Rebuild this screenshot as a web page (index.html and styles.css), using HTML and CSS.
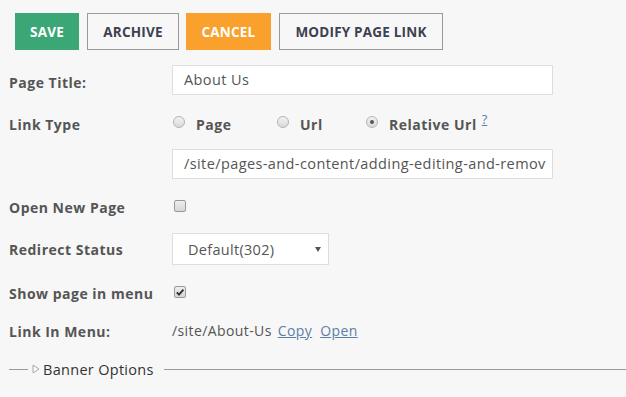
FILE: index.html
```html
<!DOCTYPE html>
<html>
<head>
<meta charset="utf-8">
<link rel="stylesheet" href="styles.css">
</head>
<body>
<div class="page">
  <div class="toolbar">
    <button class="btn btn-save">SAVE</button>
    <button class="btn btn-outline btn-archive">ARCHIVE</button>
    <button class="btn btn-cancel">CANCEL</button>
    <button class="btn btn-outline btn-modify">MODIFY PAGE LINK</button>
  </div>
  <div class="form">
    <div class="row row-title">
      <div class="label">Page Title:</div>
      <div class="field"><div class="input">About Us</div></div>
    </div>
    <div class="row row-linktype">
      <div class="label">Link Type</div>
      <div class="field radios">
        <span class="opt-group g-page"><span class="radio"></span><span class="opt">Page</span></span>
        <span class="opt-group g-url"><span class="radio"></span><span class="opt">Url</span></span>
        <span class="opt-group"><span class="radio checked"></span><span class="opt">Relative Url</span><a class="help">?</a></span>
      </div>
    </div>
    <div class="row row-url">
      <div class="label"></div>
      <div class="field"><div class="input">/site/pages-and-content/adding-editing-and-remov</div></div>
    </div>
    <div class="row row-open">
      <div class="label">Open New Page</div>
      <div class="field"><span class="checkbox"></span></div>
    </div>
    <div class="row row-redirect">
      <div class="label">Redirect Status</div>
      <div class="field"><div class="select"><span>Default(302)</span><span class="caret"></span></div></div>
    </div>
    <div class="row row-show">
      <div class="label">Show page in menu</div>
      <div class="field"><span class="checkbox checked"><svg viewBox="0 0 12 12" width="12" height="12"><path d="M2.8 6.4 L5 8.6 L9.4 3.6" fill="none" stroke="#333" stroke-width="2"/></svg></span></div>
    </div>
    <div class="row row-link">
      <div class="label">Link In Menu:</div>
      <div class="field linkval"><span class="path">/site/About-Us</span><a class="lnk">Copy</a><a class="lnk">Open</a></div>
    </div>
    <div class="banner">
      <span class="rule rule-short"></span>
      <svg class="tri" viewBox="0 0 8 10" width="8" height="10"><path d="M1 1 L7 5 L1 9 Z" fill="none" stroke="#aaa" stroke-width="1"/></svg>
      <span class="banner-text">Banner Options</span>
      <span class="rule rule-long"></span>
    </div>
  </div>
</div>
</body>
</html>
```
FILE: styles.css
```css
html, body {
  margin: 0;
  padding: 0;
  background: #f7f7f7;
}
body {
  font-family: "Open Sans", "DejaVu Sans", sans-serif;
  color: #555;
  width: 626px;
  height: 397px;
  overflow: hidden;
}
.page {
  padding: 13px 0 0 9px;
}
.toolbar {
  display: flex;
  gap: 8px;
  padding-left: 6px;
  height: 37px;
}
.btn {
  font-family: "Open Sans", sans-serif;
  font-weight: 700;
  font-size: 13.5px;
  letter-spacing: 0.2px;
  height: 37px;
  border: 1px solid transparent;
  padding: 0;
  color: #3d4150;
  background: #f7f7f7;
}
.btn-save { width: 64px; background: #3ba776; color: #fff; border-color: #3ba776; }
.btn-archive { width: 92px; margin-right: -1px; }
.btn-cancel { width: 85px; background: #f9a12c; color: #fff; border-color: #f9a12c; }
.btn-modify { width: 164px; }
.btn-outline { border-color: #9a9a9a; }

.form {
  display: flex;
  flex-direction: column;
  margin-top: 15px;
}
.row {
  display: flex;
  align-items: center;
}
.label {
  width: 163px;
  font-weight: 700;
  font-size: 14px;
  letter-spacing: 0.5px;
  color: #555;
  flex-shrink: 0;
}
.field {
  display: flex;
  align-items: center;
}
.input {
  box-sizing: border-box;
  width: 381px;
  height: 30px;
  background: #fff;
  border: 1px solid #dedede;
  padding: 0 11px;
  font-size: 14.5px;
  letter-spacing: 0.4px;
  line-height: 28px;
  color: #555;
  white-space: nowrap;
  overflow: hidden;
}
.row-title { height: 30px; }
.row-title .label { padding-top: 4px; }
.row-linktype { height: 30px; margin-top: 14px; }
.row-url { height: 30px; margin-top: 10px; }
.row-open { height: 30px; margin-top: 13px; }
.row-redirect { height: 32px; margin-top: 11px; }
.row-show { height: 30px; margin-top: 13px; }
.row-link { height: 30px; margin-top: 8px; }

.radios { padding-left: 1px; }
.opt-group { display: flex; align-items: center; }
.g-page { width: 104px; }
.g-url { width: 89px; }
.radio {
  box-sizing: border-box;
  width: 12px;
  height: 12px;
  border-radius: 50%;
  border: 1px solid #b4b4b4;
  background: linear-gradient(#f2f2f2, #d9d9d9);
  position: relative;
  top: -2px;
}
.radio.checked::after {
  content: "";
  position: absolute;
  left: 3px;
  top: 3px;
  width: 4px;
  height: 4px;
  border-radius: 50%;
  background: #555;
}
.opt {
  font-weight: 700;
  font-size: 14px;
  letter-spacing: 0.5px;
  color: #555;
  margin-left: 11px;
}
.help {
  font-size: 13px;
  color: #5b7fa6;
  text-decoration: underline;
  margin-left: 5px;
  position: relative;
  top: -5px;
}

.checkbox {
  box-sizing: border-box;
  display: inline-flex;
  width: 12px;
  height: 12px;
  border: 1px solid #999;
  border-radius: 2px;
  background: linear-gradient(#eee, #d6d6d6);
  margin-left: 2px;
  position: relative;
  top: -1px;
  overflow: hidden;
}
.checkbox svg { position: absolute; left: -1px; top: -1px; }

.select {
  box-sizing: border-box;
  width: 157px;
  height: 32px;
  border: 1px solid #dedede;
  background: #fff;
  display: flex;
  align-items: center;
  justify-content: space-between;
  padding: 0 6px 0 15px;
  font-size: 14.5px;
  letter-spacing: 0.3px;
  color: #555;
}
.caret {
  width: 0;
  height: 0;
  border-left: 3.5px solid transparent;
  border-right: 3.5px solid transparent;
  border-top: 5px solid #555;
  margin-right: 1px;
}

.linkval { font-size: 14px; letter-spacing: 0.4px; position: relative; top: -1px; }
.path { color: #555; margin-right: 6px; }
.lnk { color: #5b7fa6; text-decoration: underline; margin-right: 8px; }

.banner {
  display: flex;
  align-items: center;
  height: 30px;
  margin-top: 8px;
}
.rule { height: 1px; background: #999; }
.rule-short { width: 19px; margin-right: 4px; }
.rule-long { flex: 1; margin-left: 10px; }
.tri { margin-right: 3px; }
.banner-text { font-size: 14.5px; letter-spacing: 0.3px; color: #333; }
```
